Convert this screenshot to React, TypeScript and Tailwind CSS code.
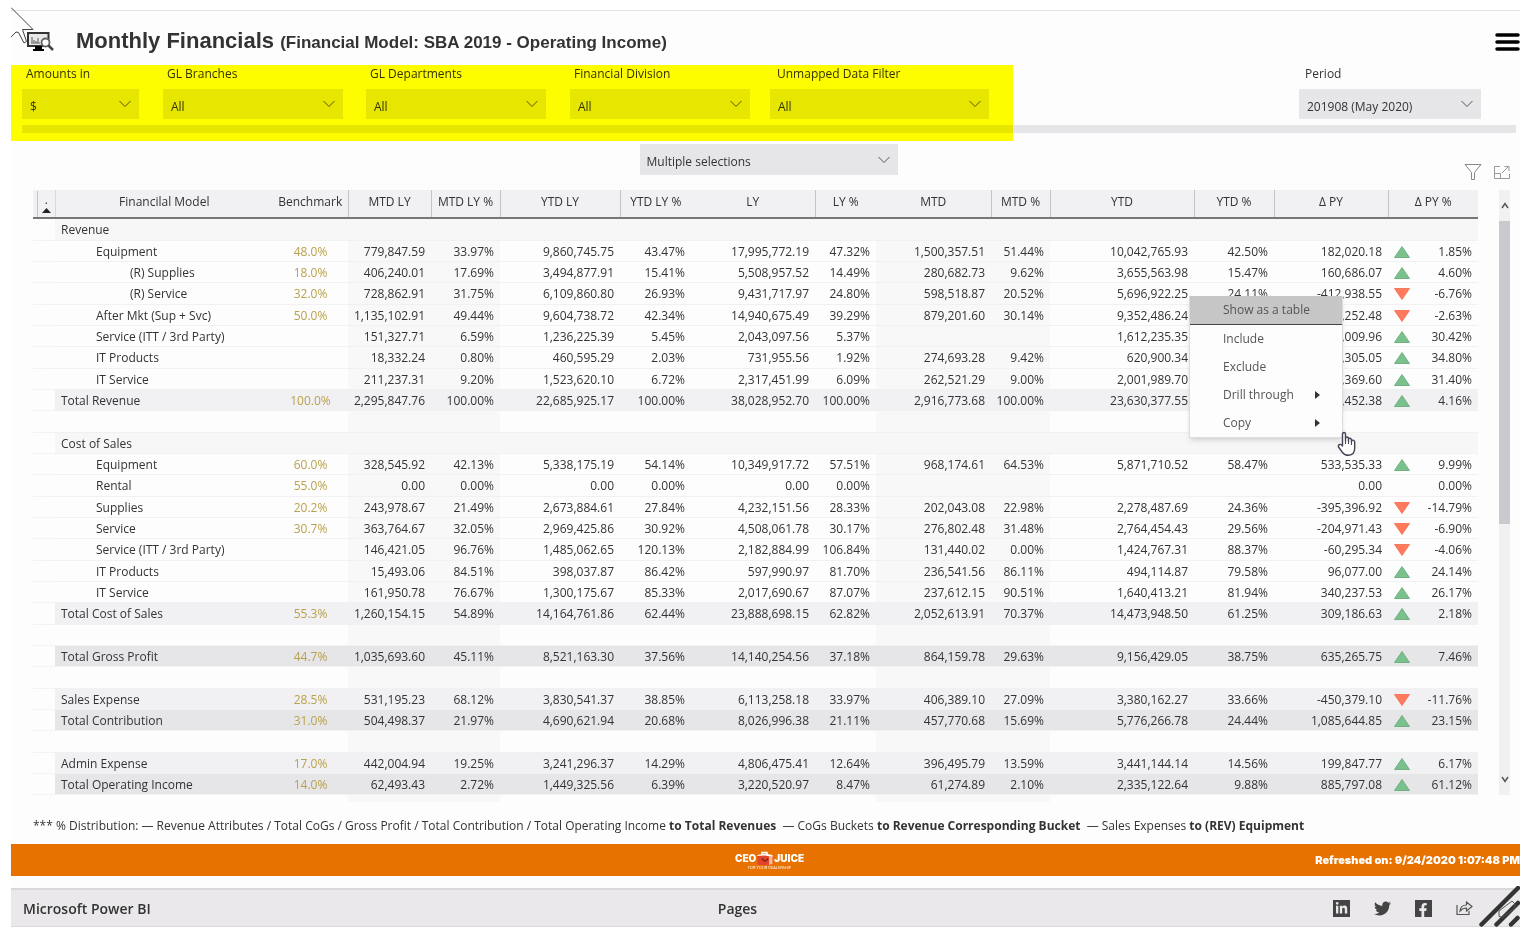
import type { ReactNode } from "react";
import { FaFacebookF, FaLinkedinIn, FaTwitter } from "react-icons/fa";

type FilterProps = {
  id: string;
  label: string;
  value: string;
  className: string;
  labelClass?: string;
};

type Row = {
  kind: "section" | "plain" | "light" | "dark" | "blank";
  name?: string;
  indent?: number;
  bench?: string;
  values?: string[];
  trend?: "up" | "down";
};

const columns = [
  { label: "MTD LY", shaded: true, line: true },
  { label: "MTD LY %", shaded: true, line: true },
  { label: "YTD LY", line: true },
  { label: "YTD LY %" },
  { label: "LY", line: true },
  { label: "LY %" },
  { label: "MTD", shaded: true, line: true },
  { label: "MTD %", shaded: true, line: true },
  { label: "YTD", line: true },
  { label: "YTD %", line: true },
  { label: "Δ PY", line: true },
];

const blank: Row = { kind: "blank" };

const rows: Row[] = [
  { kind: "section", name: "Revenue" },
  { kind: "plain", name: "Equipment", indent: 1, bench: "48.0%", trend: "up", values: ["779,847.59", "33.97%", "9,860,745.75", "43.47%", "17,995,772.19", "47.32%", "1,500,357.51", "51.44%", "10,042,765.93", "42.50%", "182,020.18", "1.85%"] },
  { kind: "plain", name: "(R) Supplies", indent: 2, bench: "18.0%", trend: "up", values: ["406,240.01", "17.69%", "3,494,877.91", "15.41%", "5,508,957.52", "14.49%", "280,682.73", "9.62%", "3,655,563.98", "15.47%", "160,686.07", "4.60%"] },
  { kind: "plain", name: "(R) Service", indent: 2, bench: "32.0%", trend: "down", values: ["728,862.91", "31.75%", "6,109,860.80", "26.93%", "9,431,717.97", "24.80%", "598,518.87", "20.52%", "5,696,922.25", "24.11%", "-412,938.55", "-6.76%"] },
  { kind: "plain", name: "After Mkt (Sup + Svc)", indent: 1, bench: "50.0%", trend: "down", values: ["1,135,102.91", "49.44%", "9,604,738.72", "42.34%", "14,940,675.49", "39.29%", "879,201.60", "30.14%", "9,352,486.24", "", ",252.48", "-2.63%"] },
  { kind: "plain", name: "Service (ITT / 3rd Party)", indent: 1, trend: "up", values: ["151,327.71", "6.59%", "1,236,225.39", "5.45%", "2,043,097.56", "5.37%", "", "", "1,612,235.35", "", ",009.96", "30.42%"] },
  { kind: "plain", name: "IT Products", indent: 1, trend: "up", values: ["18,332.24", "0.80%", "460,595.29", "2.03%", "731,955.56", "1.92%", "274,693.28", "9.42%", "620,900.34", "", ",305.05", "34.80%"] },
  { kind: "plain", name: "IT Service", indent: 1, trend: "up", values: ["211,237.31", "9.20%", "1,523,620.10", "6.72%", "2,317,451.99", "6.09%", "262,521.29", "9.00%", "2,001,989.70", "", ",369.60", "31.40%"] },
  { kind: "light", name: "Total Revenue", bench: "100.0%", trend: "up", values: ["2,295,847.76", "100.00%", "22,685,925.17", "100.00%", "38,028,952.70", "100.00%", "2,916,773.68", "100.00%", "23,630,377.55", "", ",452.38", "4.16%"] },
  blank,
  { kind: "section", name: "Cost of Sales" },
  { kind: "plain", name: "Equipment", indent: 1, bench: "60.0%", trend: "up", values: ["328,545.92", "42.13%", "5,338,175.19", "54.14%", "10,349,917.72", "57.51%", "968,174.61", "64.53%", "5,871,710.52", "58.47%", "533,535.33", "9.99%"] },
  { kind: "plain", name: "Rental", indent: 1, bench: "55.0%", values: ["0.00", "0.00%", "0.00", "0.00%", "0.00", "0.00%", "", "", "", "", "0.00", "0.00%"] },
  { kind: "plain", name: "Supplies", indent: 1, bench: "20.2%", trend: "down", values: ["243,978.67", "21.49%", "2,673,884.61", "27.84%", "4,232,151.56", "28.33%", "202,043.08", "22.98%", "2,278,487.69", "24.36%", "-395,396.92", "-14.79%"] },
  { kind: "plain", name: "Service", indent: 1, bench: "30.7%", trend: "down", values: ["363,764.67", "32.05%", "2,969,425.86", "30.92%", "4,508,061.78", "30.17%", "276,802.48", "31.48%", "2,764,454.43", "29.56%", "-204,971.43", "-6.90%"] },
  { kind: "plain", name: "Service (ITT / 3rd Party)", indent: 1, trend: "down", values: ["146,421.05", "96.76%", "1,485,062.65", "120.13%", "2,182,884.99", "106.84%", "131,440.02", "0.00%", "1,424,767.31", "88.37%", "-60,295.34", "-4.06%"] },
  { kind: "plain", name: "IT Products", indent: 1, trend: "up", values: ["15,493.06", "84.51%", "398,037.87", "86.42%", "597,990.97", "81.70%", "236,541.56", "86.11%", "494,114.87", "79.58%", "96,077.00", "24.14%"] },
  { kind: "plain", name: "IT Service", indent: 1, trend: "up", values: ["161,950.78", "76.67%", "1,300,175.67", "85.33%", "2,017,690.67", "87.07%", "237,612.15", "90.51%", "1,640,413.21", "81.94%", "340,237.53", "26.17%"] },
  { kind: "light", name: "Total Cost of Sales", bench: "55.3%", trend: "up", values: ["1,260,154.15", "54.89%", "14,164,761.86", "62.44%", "23,888,698.15", "62.82%", "2,052,613.91", "70.37%", "14,473,948.50", "61.25%", "309,186.63", "2.18%"] },
  blank,
  { kind: "dark", name: "Total Gross Profit", bench: "44.7%", trend: "up", values: ["1,035,693.60", "45.11%", "8,521,163.30", "37.56%", "14,140,254.56", "37.18%", "864,159.78", "29.63%", "9,156,429.05", "38.75%", "635,265.75", "7.46%"] },
  blank,
  { kind: "light", name: "Sales Expense", bench: "28.5%", trend: "down", values: ["531,195.23", "68.12%", "3,830,541.37", "38.85%", "6,113,258.18", "33.97%", "406,389.10", "27.09%", "3,380,162.27", "33.66%", "-450,379.10", "-11.76%"] },
  { kind: "dark", name: "Total Contribution", bench: "31.0%", trend: "up", values: ["504,498.37", "21.97%", "4,690,621.94", "20.68%", "8,026,996.38", "21.11%", "457,770.68", "15.69%", "5,776,266.78", "24.44%", "1,085,644.85", "23.15%"] },
  blank,
  { kind: "light", name: "Admin Expense", bench: "17.0%", trend: "up", values: ["442,004.94", "19.25%", "3,241,296.37", "14.29%", "4,806,475.41", "12.64%", "396,495.79", "13.59%", "3,441,144.14", "14.56%", "199,847.77", "6.17%"] },
  { kind: "dark", name: "Total Operating Income", bench: "14.0%", trend: "up", values: ["62,493.43", "2.72%", "1,449,325.56", "6.39%", "3,220,520.97", "8.47%", "61,274.89", "2.10%", "2,335,122.64", "9.88%", "885,797.08", "61.12%"] },
];

const rowColor = {
  section: "bg-[#f7f7f8]",
  plain: "",
  light: "bg-[#f1f0f3]",
  dark: "bg-[#e6e5e8]",
  blank: "",
};

const indents = ["pl-1.5", "pl-[41px]", "pl-[75px]"];

const Chevron = () => (
  <svg
    className="pointer-events-none absolute right-2 top-1/2 -mt-1"
    width="12"
    height="8"
    viewBox="0 0 12 8"
    fill="none"
    stroke="#555"
    strokeWidth="1"
  >
    <path d="M0.5 1 6 6.5 11.5 1" />
  </svg>
);

const Filter = ({ id, label, value, className, labelClass = "pl-1" }: FilterProps) => (
  <div className={className}>
    <label htmlFor={id} className={`block h-6 leading-[17px] ${labelClass}`}>
      {label}
    </label>
    <div className="relative">
      <select
        id={id}
        className="block h-[30px] w-full appearance-none bg-[#e6e6e9] pl-2 pt-1.5 leading-4"
      >
        <option>{value}</option>
      </select>
      <Chevron />
    </div>
  </div>
);

const Trend = ({ dir }: { dir?: "up" | "down" }) => {
  if (!dir) return <span />;
  return (
    <svg width="16" height="12" viewBox="0 0 16 12">
      {dir === "up" ? (
        <path d="M8 0.5 15.5 11.5H0.5Z" fill="#7cc08e" stroke="#5ca872" strokeWidth="0.8" />
      ) : (
        <path d="M8 11.5 15.5 0.5H0.5Z" fill="#ff7a5c" stroke="#f4694a" strokeWidth="0.8" />
      )}
    </svg>
  );
};

const MenuItem = ({ children, arrow }: { children: ReactNode; arrow?: boolean }) => (
  <button
    type="button"
    role="menuitem"
    className="flex h-7 w-full items-center justify-between pl-[33px] pr-[22px] text-left"
  >
    {children}
    {arrow && (
      <svg width="5" height="8" viewBox="0 0 5 8">
        <path d="M0 0 5 4 0 8Z" fill="#333" />
      </svg>
    )}
  </button>
);

const ContextMenu = () => (
  <div
    role="menu"
    className="absolute left-[1189px] top-[296px] w-[154px] border border-t-0 border-[#ddd] bg-[#fdfdfd] text-[#555] shadow-md"
  >
    <div className="border-b border-[#444] bg-[#c6c6c6]">
      <MenuItem>Show as a table</MenuItem>
    </div>
    <MenuItem>Include</MenuItem>
    <MenuItem>Exclude</MenuItem>
    <MenuItem arrow>Drill through</MenuItem>
    <MenuItem arrow>Copy</MenuItem>
    <svg
      className="absolute left-[147px] top-[135px]"
      width="20"
      height="26"
      viewBox="0 0 20 26"
      fill="#fff"
      stroke="#445"
      strokeWidth="1.4"
      strokeLinejoin="round"
    >
      <path d="M5.500 15V3.500Q5.500 1.500 7 1.500T8.500 3.500V10V7.500Q8.500 6 10 6T11.500 8V10.500V8.500Q11.700 7 13 7.300T14.500 9V11.500V10Q15 8.800 16.300 9.200T17.700 11V17Q17.700 24 11.500 24.300Q7.500 24.300 5.500 21.500L1.500 16Q1 14 2.600 13.500T5.500 15Z" />
      <path d="M8.500 9V13M11.500 10V13M14.500 11V14" fill="none" strokeWidth="1" />
    </svg>
  </div>
);

const ReportTable = () => (
  <table className="w-full table-fixed border-collapse text-right">
    <colgroup>
      <col className="w-[22px]" />
      <col className="w-[218px]" />
      <col className="w-[75px]" />
      <col className="w-[83px]" />
      <col className="w-[69px]" />
      <col className="w-[120px]" />
      <col className="w-[71px]" />
      <col className="w-[124px]" />
      <col className="w-[61px]" />
      <col className="w-[115px]" />
      <col className="w-[59px]" />
      <col className="w-[144px]" />
      <col className="w-[80px]" />
      <col className="w-[114px]" />
      <col className="w-[90px]" />
    </colgroup>
    <thead>
      <tr className="h-7 border-b-2 border-[#777] bg-[#f1f0f3] text-center">
        <th className="border-r border-[#d8d8da] p-0 pl-1 font-normal">
          <div className="flex h-[26px] flex-col items-center justify-end gap-1 border-l border-[#c4c4c8] pb-1">
            <span className="leading-[8px]">.</span>
            <svg width="9" height="5" viewBox="0 0 9 5">
              <path d="M4.500 0 9 5H0Z" fill="#222" />
            </svg>
          </div>
        </th>
        <th className="p-0 pb-1 font-normal">Financilal Model</th>
        <th className="border-r border-[#c4c4c8] p-0 pb-1 font-normal">Benchmark</th>
        {columns.map((col) => (
          <th
            key={col.label}
            className={`whitespace-nowrap p-0 pb-1 font-normal ${
              col.line && col.label !== "MTD LY %" ? "border-r border-[#c4c4c8]" : ""
            } ${col.label === "YTD LY" ? "border-l" : ""}`}
          >
            {col.label}
          </th>
        ))}
        <th className="p-0 pb-1 font-normal">Δ PY %</th>
      </tr>
    </thead>
    <tbody>
      {rows.map((row, r) => (
        <tr key={r} className={r % 3 === 0 ? "h-[22px]" : "h-[21px]"}>
          <td className="border-b border-[#f3f3f4] p-0" />
          <td
            className={`whitespace-nowrap border-b border-[#f1f1f2] p-0 pt-0.5 text-left leading-4 ${
              indents[row.indent ?? 0]
            } ${rowColor[row.kind]}`}
          >
            {row.name}
          </td>
          <td
            className={`border-b border-[#f1f1f2] p-0 pt-0.5 text-center leading-4 text-[#b9a24c] ${rowColor[row.kind]}`}
          >
            {row.bench}
          </td>
          {columns.map((col, i) => (
            <td
              key={col.label}
              className={`border-b border-[#f1f1f2] p-0 pr-1.5 pt-0.5 leading-4 ${
                rowColor[row.kind] || (col.shaded ? "bg-[#f8f8f9]" : "")
              }`}
            >
              {row.values?.[i]}
            </td>
          ))}
          <td className={`border-b border-[#f1f1f2] p-0 pt-0.5 leading-4 ${rowColor[row.kind]}`}>
            <div className="flex items-center justify-between pl-1.5 pr-1.5">
              <Trend dir={row.trend} />
              {row.values?.[11]}
            </div>
          </td>
        </tr>
      ))}
      <tr className="h-2">
        <td colSpan={3} className="p-0" />
        {columns.map((col) => (
          <td key={col.label} className={`p-0 ${col.shaded ? "bg-[#f8f8f9]" : ""}`} />
        ))}
        <td className="p-0" />
      </tr>
    </tbody>
  </table>
);

const Scrollbar = () => (
  <div className="ml-[21px] flex h-[605px] w-[11px] shrink-0 flex-col items-center justify-between bg-[#f1f0f3]">
    <svg className="my-3 shrink-0" width="8" height="7" viewBox="0 0 8 7" fill="none" stroke="#555" strokeWidth="1.500">
      <path d="M1 6 4 1.500 7 6" />
    </svg>
    <div className="mb-auto h-[303px] w-full bg-[#cbc9ce]" />
    <svg className="my-3 shrink-0" width="8" height="7" viewBox="0 0 8 7" fill="none" stroke="#555" strokeWidth="1.500">
      <path d="M1 1 4 5.500 7 1" />
    </svg>
  </div>
);

const Logo = () => (
  <div className="flex flex-col items-center pl-2 text-white">
    <div className="flex items-center font-['Inter'] text-[10px] font-black leading-3">
      CEO
      <svg width="18" height="15" viewBox="0 0 18 15">
        <path d="M6 3.500V1.500H11V3.500" fill="none" stroke="#fff" strokeWidth="1.500" />
        <rect x="1.500" y="4" width="15" height="10" rx="1.500" fill="#e2452c" />
        <path d="M1.500 5V4L9 2.500 16.500 4V6L9 4.500Z" fill="#fff" />
        <path d="M13 5.500H16.500V13L13 14Z" fill="#f6b98f" />
        <path d="M6 7.500Q9 12.500 12 7.500" fill="none" stroke="#8c2318" strokeWidth="1.500" />
      </svg>
      JUICE
    </div>
    <div className="text-[4px] leading-[4px]">FOR YOUR DEALERSHIP</div>
  </div>
);

export default function App() {
  return (
    <div className="relative overflow-hidden bg-white pl-[11px] pr-[9px] pt-2.5 font-['Open_Sans',sans-serif] text-[12px] text-[#333]">
      <div className="border-t border-[#e2e2e4] bg-[#fdfdfd]">
        <header className="flex h-[54px] items-center pl-4 pt-2">
          <svg width="28" height="22" viewBox="0 0 28 22">
            <path d="M1 2H21.500V15H1Z" fill="#e8e8e8" stroke="#333" strokeWidth="2" />
            <path d="M8 15H15V18H17V20H6V18H8Z" fill="#000" />
            <path d="M5 6V12M7 9V12M9 10V12M11 7V12M4 12H13" fill="none" stroke="#888" strokeWidth="1.500" />
            <circle cx="18.500" cy="11.500" r="4" fill="#fff" stroke="#666" strokeWidth="1.800" />
            <path d="M21.500 14.500 26 19" stroke="#444" strokeWidth="2.500" />
          </svg>
          <h1 className="ml-[21px] font-['Liberation_Sans',sans-serif] text-[22px] font-bold leading-6">
            Monthly Financials <span className="text-[17px]">(Financial Model: SBA 2019 - Operating Income)</span>
          </h1>
          <button type="button" aria-label="Menu" className="ml-auto">
            <svg width="25" height="18" viewBox="0 0 25 18" stroke="#000" strokeWidth="3.500" strokeLinecap="round">
              <path d="M2 2H23M2 9H23M2 16H23" />
            </svg>
          </button>
        </header>

        <section className="relative pb-2 pl-[11px]">
          <div className="flex pr-[39px]">
            <Filter id="amounts" label="Amounts in" value="$" className="w-[117px]" />
            <Filter id="branches" label="GL Branches" value="All" className="ml-6 w-[180px]" />
            <Filter id="departments" label="GL Departments" value="All" className="ml-[23px] w-[180px]" />
            <Filter id="division" label="Financial Division" value="All" className="ml-6 w-[180px]" />
            <Filter id="unmapped" label="Unmapped Data Filter" value="All" className="ml-5 w-[219px]" labelClass="pl-[7px]" />
            <Filter id="period" label="Period" value="201908 (May 2020)" className="ml-auto w-[182px]" labelClass="pl-1.5" />
          </div>
          <div className="mr-1 mt-1.5 h-2 bg-[#e6e6e9]" />
          <div className="pointer-events-none absolute left-0 top-0 h-full w-[1002px] bg-[#ffff00] mix-blend-multiply" />
        </section>

        <section className="grid h-[49px] grid-cols-[1fr_258px_1fr] items-start pl-4 pr-2.5 pt-[3px]">
          <span />
          <div className="relative">
            <select
              aria-label="Columns"
              className="block h-[31px] w-full appearance-none bg-[#e6e6e9] pl-[7px] pt-1 leading-4"
            >
              <option>Multiple selections</option>
            </select>
            <Chevron />
          </div>
          <div className="flex justify-end gap-3 pt-5">
            <button type="button" aria-label="Filter">
              <svg width="18" height="16" viewBox="0 0 18 16" fill="none" stroke="#888">
                <path d="M1 0.500H17L10.500 8.500V15.500H7.500V8.500Z" />
              </svg>
            </button>
            <button type="button" aria-label="Focus mode">
              <svg width="16" height="16" viewBox="0 0 16 16" fill="none" stroke="#999">
                <path d="M6 2.500H0.500V14.500H15.500V10M0.500 9.500H6.500V14.500M8 9 14.500 2.500M10.500 2.500H15V7" />
              </svg>
            </button>
          </div>
        </section>

        <section className="flex items-start pl-[22px] pr-2.5">
          <ReportTable />
          <Scrollbar />
        </section>

        <p className="flex h-[42px] items-center whitespace-pre pl-[22px] pt-1.5">
          *** % Distribution: — Revenue Attributes / Total CoGs / Gross Profit / Total Contribution / Total Operating Income{" "}
          <b>to Total Revenues</b>
          {"  — CoGs Buckets "}
          <b>to Revenue Corresponding Bucket</b>
          {"  — Sales Expenses "}
          <b>to (REV) Equipment</b>
        </p>

        <div className="grid h-8 grid-cols-3 items-center bg-[#e87200]">
          <span />
          <Logo />
          <span className="whitespace-nowrap text-right font-['Inter'] text-[11px] font-black text-white">
            Refreshed on: 9/24/2020 1:07:48 PM
          </span>
        </div>

        <footer className="mt-3 grid h-[39px] grid-cols-3 items-center border-y border-t-2 border-[#d8d7da] bg-[#eae8eb] pl-3 text-[14px] font-semibold">
          <a href="#">Microsoft Power BI</a>
          <span className="pr-[68px] text-center">Pages</span>
          <div className="flex items-center justify-end gap-6 pr-[47px] text-[#444]">
            <a href="#" aria-label="LinkedIn" className="flex size-[17px] items-center justify-center bg-[#444] text-[#eae8eb]">
              <FaLinkedinIn size={13} />
            </a>
            <a href="#" aria-label="Twitter">
              <FaTwitter size={17} />
            </a>
            <a href="#" aria-label="Facebook" className="flex size-[17px] items-end justify-end bg-[#444] pr-0.5 text-[#eae8eb]">
              <FaFacebookF size={14} />
            </a>
            <a href="#" aria-label="Share">
              <svg width="17" height="16" viewBox="0 0 17 16" fill="none" stroke="#555" strokeWidth="1.200">
                <path d="M1 5V14.500H13V11M4 11Q4.500 5 10.500 5V2L16 6.500 10.500 11V8Q6.500 8 4 11Z" />
              </svg>
            </a>
          </div>
        </footer>
      </div>

      <ContextMenu />

      {/* pen marks in the page corners */}
      <svg className="absolute left-[11px] top-[7px]" width="25" height="38" viewBox="0 0 25 38" fill="none" stroke="#444">
        <path d="M0 0.500 22 22.500H11.500L15.500 34.500 13 36 7.500 25.500 5 25 0 30" />
      </svg>
      <svg
        className="absolute bottom-0 right-[9px]"
        width="41"
        height="41"
        viewBox="0 0 41 41"
        fill="none"
        stroke="#333"
        strokeWidth="4.500"
        strokeLinecap="round"
      >
        <path d="M2.500 38.500 39 2M17.500 38.500 39 17M32 38.500 38.500 32" />
        <path d="M20 30V25L33 15 36 18V22L24 31Z" stroke="#555" strokeWidth="1" />
      </svg>
    </div>
  );
}
